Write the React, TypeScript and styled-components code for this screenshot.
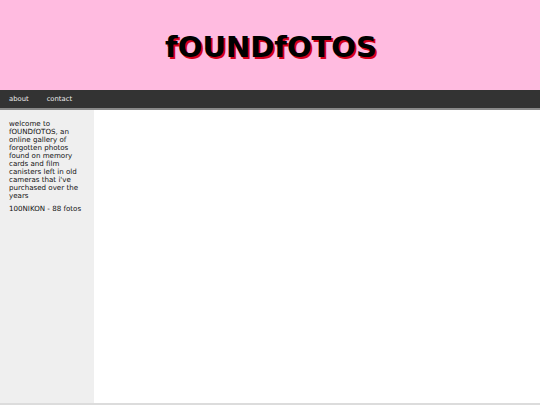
import React from "react";
import styled, { createGlobalStyle } from "styled-components";

const Global = createGlobalStyle`
  html, body { margin: 0; padding: 0; background: #ffffff; }
  body { font-family: "DejaVu Sans", Verdana, sans-serif; }
`;

const Page = styled.div`
  display: flex;
  flex-direction: column;
  height: 403px;
  border-bottom: 2px solid #dcdcdc;
`;

const Header = styled.header`
  height: 90px;
  background: #ffbbe0;
  display: flex;
  align-items: center;
  justify-content: center;
  padding-top: 4px;
  box-sizing: border-box;
`;

const Title = styled.h1`
  margin: 0;
  font-family: "DejaVu Sans", Verdana, sans-serif;
  font-weight: bold;
  font-size: 29px;
  color: #000;
  text-shadow: 2px 2px 0 #d6001c;
  transform: translateX(1px);
`;

const Nav = styled.nav`
  height: 18px;
  background: #333333;
  border-bottom: 2px solid #8a8a8a;
  display: flex;
  align-items: center;
  padding-left: 9px;
  gap: 18px;
`;

const NavLink = styled.a`
  color: #ececec;
  font-size: 6.8px;
  text-decoration: none;
  -webkit-font-smoothing: antialiased;
`;

const Body = styled.div`
  flex: 1;
  display: flex;
`;

const Sidebar = styled.aside`
  width: 94px;
  background: #efefef;
  padding: 10px 5px 0 9px;
  box-sizing: border-box;
`;

const Para = styled.p`
  margin: 0 0 5px 0;
  font-size: 7.1px;
  line-height: 7.95px;
  color: #111;
`;

const Main = styled.main`
  flex: 1;
  background: #fff;
`;

export default function App() {
  return (
    <>
      <Global />
      <Page>
        <Header>
          <Title>fOUNDfOTOS</Title>
        </Header>
        <Nav>
          <NavLink href="#">about</NavLink>
          <NavLink href="#">contact</NavLink>
        </Nav>
        <Body>
          <Sidebar>
            <Para>
              welcome to fOUNDfOTOS, an online gallery of forgotten photos found on memory cards and film canisters left in old cameras that i've purchased over the years
            </Para>
            <Para>100NIKON - 88 fotos</Para>
          </Sidebar>
          <Main />
        </Body>
      </Page>
    </>
  );
}
